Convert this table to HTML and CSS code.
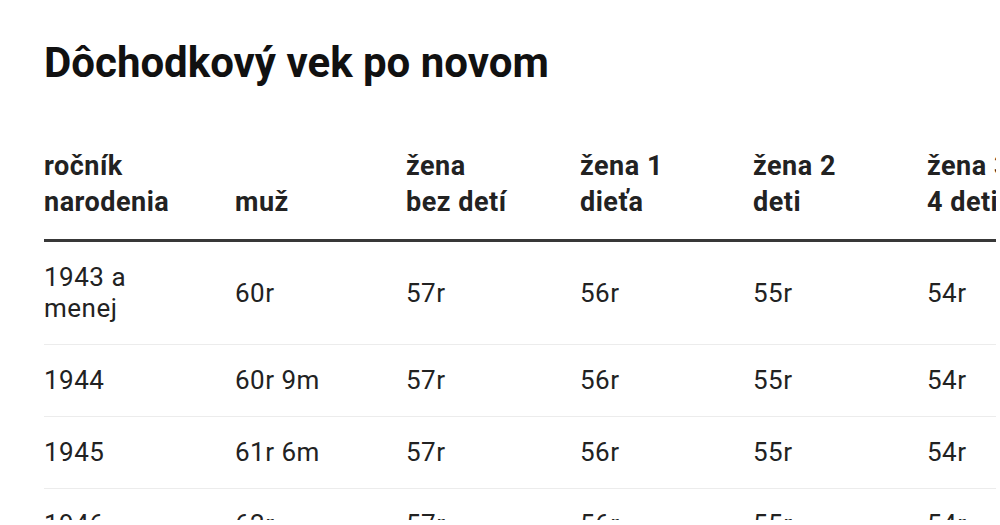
FILE: index.html
```html
<!DOCTYPE html>
<html lang="sk">
<head>
<meta charset="utf-8">
<title>Dôchodkový vek po novom</title>
<link rel="stylesheet" href="styles.css">
</head>
<body>
<main class="page">
  <h1 class="title">Dôchodkový vek po novom</h1>
  <div class="table-wrap">
    <table class="pension">
      <colgroup>
        <col class="c-year">
        <col class="c-man">
        <col class="c-w0">
        <col class="c-w1">
        <col class="c-w2">
        <col class="c-w4">
      </colgroup>
      <thead>
        <tr>
          <th>ročník<br>narodenia</th>
          <th>muž</th>
          <th>žena<br>bez detí</th>
          <th>žena 1<br>dieťa</th>
          <th>žena 2<br>deti</th>
          <th>žena 3-<br>4 deti</th>
        </tr>
      </thead>
      <tbody>
        <tr>
          <td>1943 a<br>menej</td>
          <td>60r</td>
          <td>57r</td>
          <td>56r</td>
          <td>55r</td>
          <td>54r</td>
        </tr>
        <tr>
          <td>1944</td>
          <td>60r 9m</td>
          <td>57r</td>
          <td>56r</td>
          <td>55r</td>
          <td>54r</td>
        </tr>
        <tr>
          <td>1945</td>
          <td>61r 6m</td>
          <td>57r</td>
          <td>56r</td>
          <td>55r</td>
          <td>54r</td>
        </tr>
        <tr>
          <td>1946</td>
          <td>62r</td>
          <td>57r</td>
          <td>56r</td>
          <td>55r</td>
          <td>54r</td>
        </tr>
      </tbody>
    </table>
  </div>
</main>
</body>
</html>
```

FILE: styles.css
```css
html, body {
  margin: 0;
  padding: 0;
  background: #ffffff;
}

.page {
  height: 520px;
  overflow: hidden;
  padding: 0 4px 0 44px;
  font-family: Roboto, "Liberation Sans", Arial, sans-serif;
  color: #222222;
}

.title {
  margin: 38px 0 0;
  font-size: 42px;
  line-height: 50px;
  font-weight: 700;
  color: #111111;
  letter-spacing: 0;
}

.table-wrap {
  margin-top: 60px;
  width: 952px;
  overflow: hidden;
}

.pension {
  border-collapse: collapse;
  table-layout: fixed;
  width: 1056px;
}

.c-year { width: 191px; }
.c-man { width: 171px; }
.c-w0 { width: 174px; }
.c-w1 { width: 173px; }
.c-w2 { width: 174px; }
.c-w4 { width: 173px; }

.pension th {
  text-align: left;
  vertical-align: bottom;
  padding: 0 0 19px;
  font-size: 27px;
  line-height: 36px;
  font-weight: 700;
  letter-spacing: 0.5px;
  color: #222222;
  border-bottom: 3px solid #383838;
  white-space: nowrap;
}

.pension td {
  text-align: left;
  vertical-align: middle;
  padding: 20px 0;
  font-size: 26px;
  line-height: 31px;
  font-weight: 400;
  letter-spacing: 0.5px;
  color: #222222;
  border-bottom: 1px solid #ececec;
}
```
